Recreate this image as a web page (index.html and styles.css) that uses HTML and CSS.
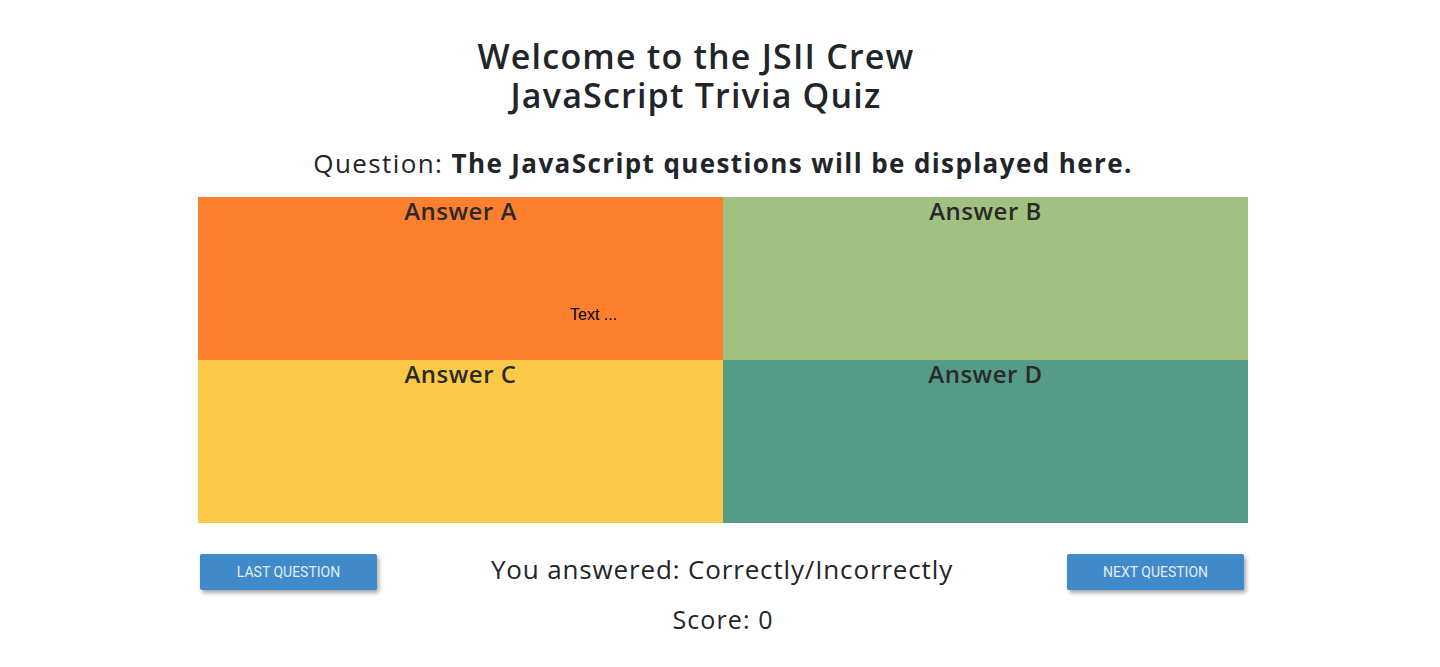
FILE: index.html
```html
<!DOCTYPE html>
<html>
<head>
<meta charset="utf-8">
<title>JSII Crew Trivia</title>
<link rel="stylesheet" href="styles.css">
</head>
<body>
<main class="quiz">
  <h1 class="title">Welcome to the JSII Crew<br>JavaScript Trivia Quiz</h1>
  <h2 class="question">Question: <strong>The JavaScript questions will be displayed here.</strong></h2>
  <div class="answers">
    <div class="answer answer-a"><h3 class="label">Answer A</h3><span class="note">Text ...</span></div>
    <div class="answer answer-b"><h3 class="label">Answer B</h3></div>
    <div class="answer answer-c"><h3 class="label">Answer C</h3></div>
    <div class="answer answer-d"><h3 class="label">Answer D</h3></div>
  </div>
  <div class="controls">
    <button class="btn">Last Question</button>
    <p class="result">You answered: Correctly/Incorrectly</p>
    <button class="btn">Next Question</button>
  </div>
  <p class="score">Score: 0</p>
</main>
</body>
</html>
```
FILE: styles.css
```css
html, body { margin: 0; padding: 0; background: #fff; }
body { font-family: "Open Sans", "Noto Sans", sans-serif; color: #212529; }
.quiz { width: 1050px; margin-left: calc(50% - 522px); padding-top: 37px; }
.title { margin: 0; padding-right: 54px; text-align: center; font-size: 34px; line-height: 39px; font-weight: 600; letter-spacing: 1.2px; }
.question { margin: 31px 0 17px; text-align: center; font-size: 26px; line-height: 34px; font-weight: 400; letter-spacing: 1.4px; }
.question strong { font-weight: 700; }
.answers { display: grid; grid-template-columns: 1fr 1fr; grid-template-rows: 163px 163px; }
.answer { position: relative; }
.answer-a { background: #fe7f2d; }
.answer-b { background: #a1c181; }
.answer-c { background: #fcca46; }
.answer-d { background: #569b87; }
.label { margin: 0; text-align: center; font-size: 24px; line-height: 28px; font-weight: 600; letter-spacing: 0.5px; color: #2a2a2a; }
.note { position: absolute; left: 372px; top: 109px; font-family: "Liberation Sans", Arial, sans-serif; font-size: 16px; color: #000; }
.controls { display: flex; align-items: flex-start; justify-content: space-between; padding: 0 4px 0 2px; margin-top: 31px; }
.btn { width: 177px; height: 36px; border: none; border-radius: 2px; background: #408ac9; color: #e3edf8; font-family: Roboto, sans-serif; font-size: 14px; text-transform: uppercase; box-shadow: 2px 3px 4px rgba(0,0,0,0.35); }
.result { margin: -2px 0 0; font-size: 26px; line-height: 34px; letter-spacing: 0.85px; }
.score { margin: 13px 0 0; text-align: center; font-size: 25px; line-height: 32px; letter-spacing: 1.1px; }
```
